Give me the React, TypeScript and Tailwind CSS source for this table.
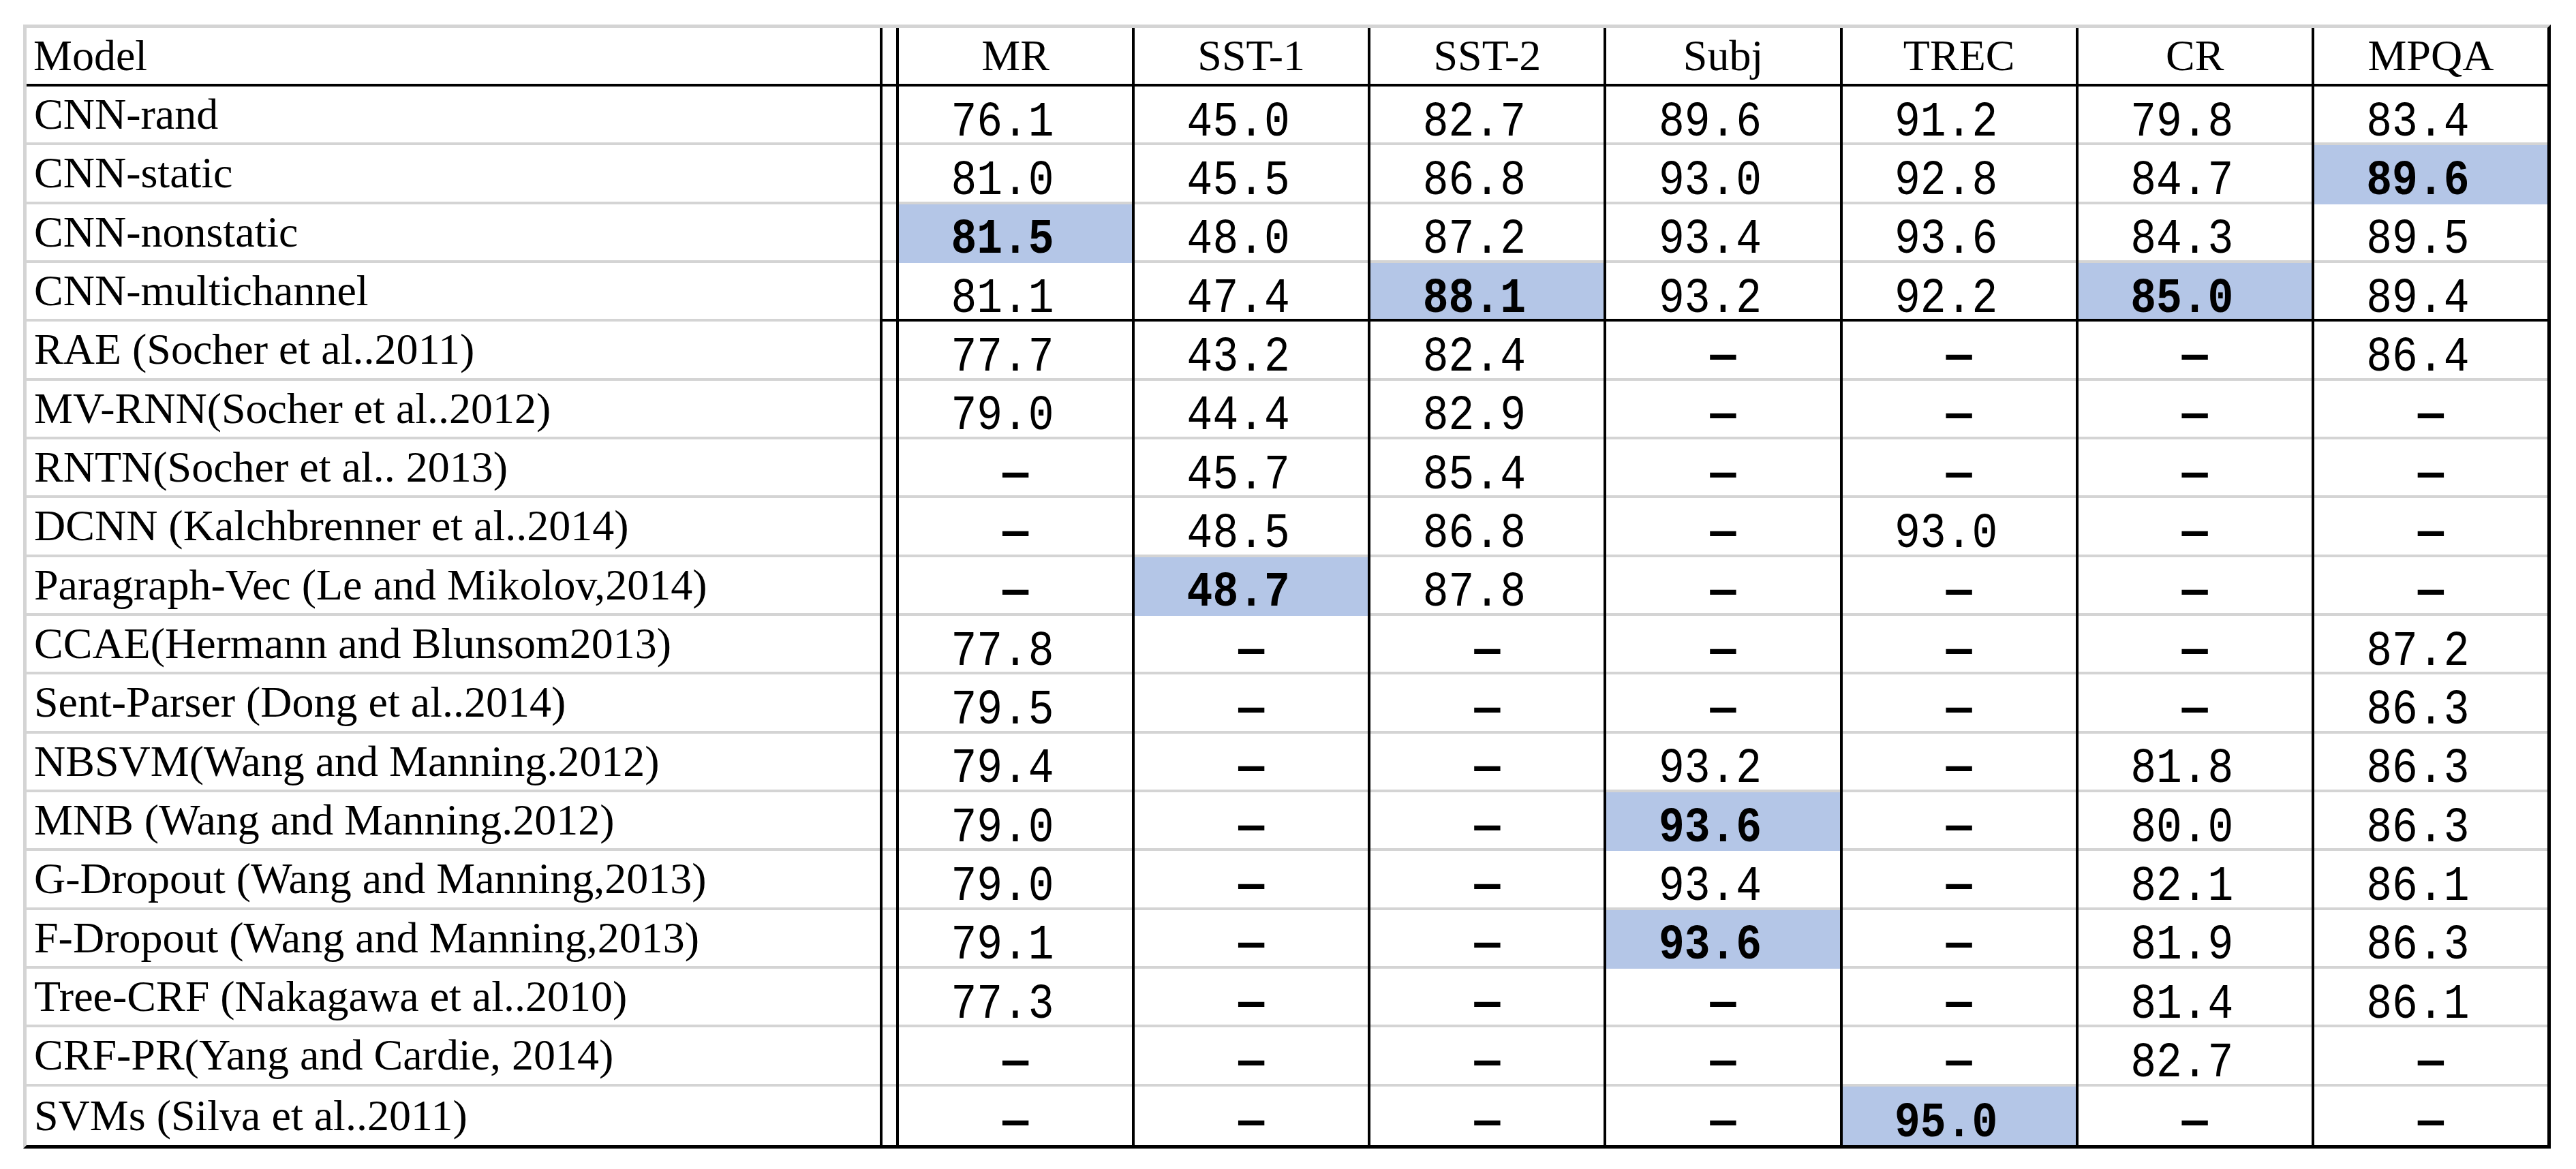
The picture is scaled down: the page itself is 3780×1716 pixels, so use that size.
import React from "react";

type Row = { name: string; vals: string[] };

// "*" marks the best score in a column (blue cell, bold)
const rows: Row[] = [
  { name: "CNN-rand", vals: ["76.1", "45.0", "82.7", "89.6", "91.2", "79.8", "83.4"] },
  { name: "CNN-static", vals: ["81.0", "45.5", "86.8", "93.0", "92.8", "84.7", "89.6*"] },
  { name: "CNN-nonstatic", vals: ["81.5*", "48.0", "87.2", "93.4", "93.6", "84.3", "89.5"] },
  { name: "CNN-multichannel", vals: ["81.1", "47.4", "88.1*", "93.2", "92.2", "85.0*", "89.4"] },
  { name: "RAE (Socher et al..2011)", vals: ["77.7", "43.2", "82.4", "-", "-", "-", "86.4"] },
  { name: "MV-RNN(Socher et al..2012)", vals: ["79.0", "44.4", "82.9", "-", "-", "-", "-"] },
  { name: "RNTN(Socher et al.. 2013)", vals: ["-", "45.7", "85.4", "-", "-", "-", "-"] },
  { name: "DCNN (Kalchbrenner et al..2014)", vals: ["-", "48.5", "86.8", "-", "93.0", "-", "-"] },
  { name: "Paragraph-Vec (Le and Mikolov,2014)", vals: ["-", "48.7*", "87.8", "-", "-", "-", "-"] },
  { name: "CCAE(Hermann and Blunsom2013)", vals: ["77.8", "-", "-", "-", "-", "-", "87.2"] },
  { name: "Sent-Parser (Dong et al..2014)", vals: ["79.5", "-", "-", "-", "-", "-", "86.3"] },
  { name: "NBSVM(Wang and Manning.2012)", vals: ["79.4", "-", "-", "93.2", "-", "81.8", "86.3"] },
  { name: "MNB (Wang and Manning.2012)", vals: ["79.0", "-", "-", "93.6*", "-", "80.0", "86.3"] },
  { name: "G-Dropout (Wang and Manning,2013)", vals: ["79.0", "-", "-", "93.4", "-", "82.1", "86.1"] },
  { name: "F-Dropout (Wang and Manning,2013)", vals: ["79.1", "-", "-", "93.6*", "-", "81.9", "86.3"] },
  { name: "Tree-CRF (Nakagawa et al..2010)", vals: ["77.3", "-", "-", "-", "-", "81.4", "86.1"] },
  { name: "CRF-PR(Yang and Cardie, 2014)", vals: ["-", "-", "-", "-", "-", "82.7", "-"] },
  { name: "SVMs (Silva et al..2011)", vals: ["-", "-", "-", "-", "95.0*", "-", "-"] },
];

const cols = ["MR", "SST-1", "SST-2", "Subj", "TREC", "CR", "MPQA"];

const serif = "font-['Liberation_Serif',serif] text-[64px] leading-none text-black";
const mono = "font-['Liberation_Mono',monospace] text-[63px] leading-none text-black";

function VLine() {
  return <div className="w-[4px] shrink-0 self-stretch bg-black" />;
}

function Cell({ v, last, dark }: { v: string; last: boolean; dark: boolean }) {
  const hi = v.endsWith("*");
  const text = hi ? v.slice(0, -1) : v;
  const border = last
    ? ""
    : dark
      ? "border-b-4 border-black"
      : hi
        ? "border-b-4 border-transparent"
        : "border-b-4 border-[#d4d4d4]";
  return (
    <div className={`flex flex-1 items-center justify-center ${border} ${hi ? "bg-[#b4c6e7]" : ""}`}>
      {text === "-" ? (
        <span className={`${mono} font-bold translate-y-[11px] scale-y-[1.15]`}>—</span>
      ) : (
        <span className={`${mono} ${hi ? "font-bold" : ""} pr-[38px] translate-y-[12px] scale-y-[1.15]`}>{text}</span>
      )}
    </div>
  );
}

export default function App() {
  return (
    <div className="w-[3780px] h-[1716px] bg-white pl-[34px] pt-[36px]">
      <div className="w-[3709px] border-l-[5px] border-t-[5px] border-l-[#d4d4d4] border-t-[#d4d4d4] border-r-[5px] border-b-[5px] border-r-black border-b-black">
        {/* header */}
        <div className="flex h-[86px] border-b-4 border-black">
          <div className={`w-[1252px] shrink-0 flex items-center pl-[10px] ${serif}`}>Model</div>
          <VLine />
          <div className="w-[20px] shrink-0" />
          {cols.map((c) => (
            <React.Fragment key={c}>
              <VLine />
              <div className={`flex flex-1 items-center justify-center ${serif}`}>{c}</div>
            </React.Fragment>
          ))}
        </div>
        {rows.map((r, i) => {
          const last = i === rows.length - 1;
          // CNN variants are split from the other methods by a dark rule
          const dark = i === 3;
          const line = last ? "" : "border-b-4 border-[#d4d4d4]";
          return (
            <div key={r.name} className="flex h-[86.33px]">
              <div className={`w-[1252px] shrink-0 flex items-center pl-[11px] ${line} ${serif}`}>{r.name}</div>
              <VLine />
              <div className={`w-[20px] shrink-0 ${dark ? "border-b-4 border-black" : line}`} />
              {r.vals.map((v, j) => (
                <React.Fragment key={j}>
                  <VLine />
                  <Cell v={v} last={last} dark={dark} />
                </React.Fragment>
              ))}
            </div>
          );
        })}
      </div>
    </div>
  );
}
